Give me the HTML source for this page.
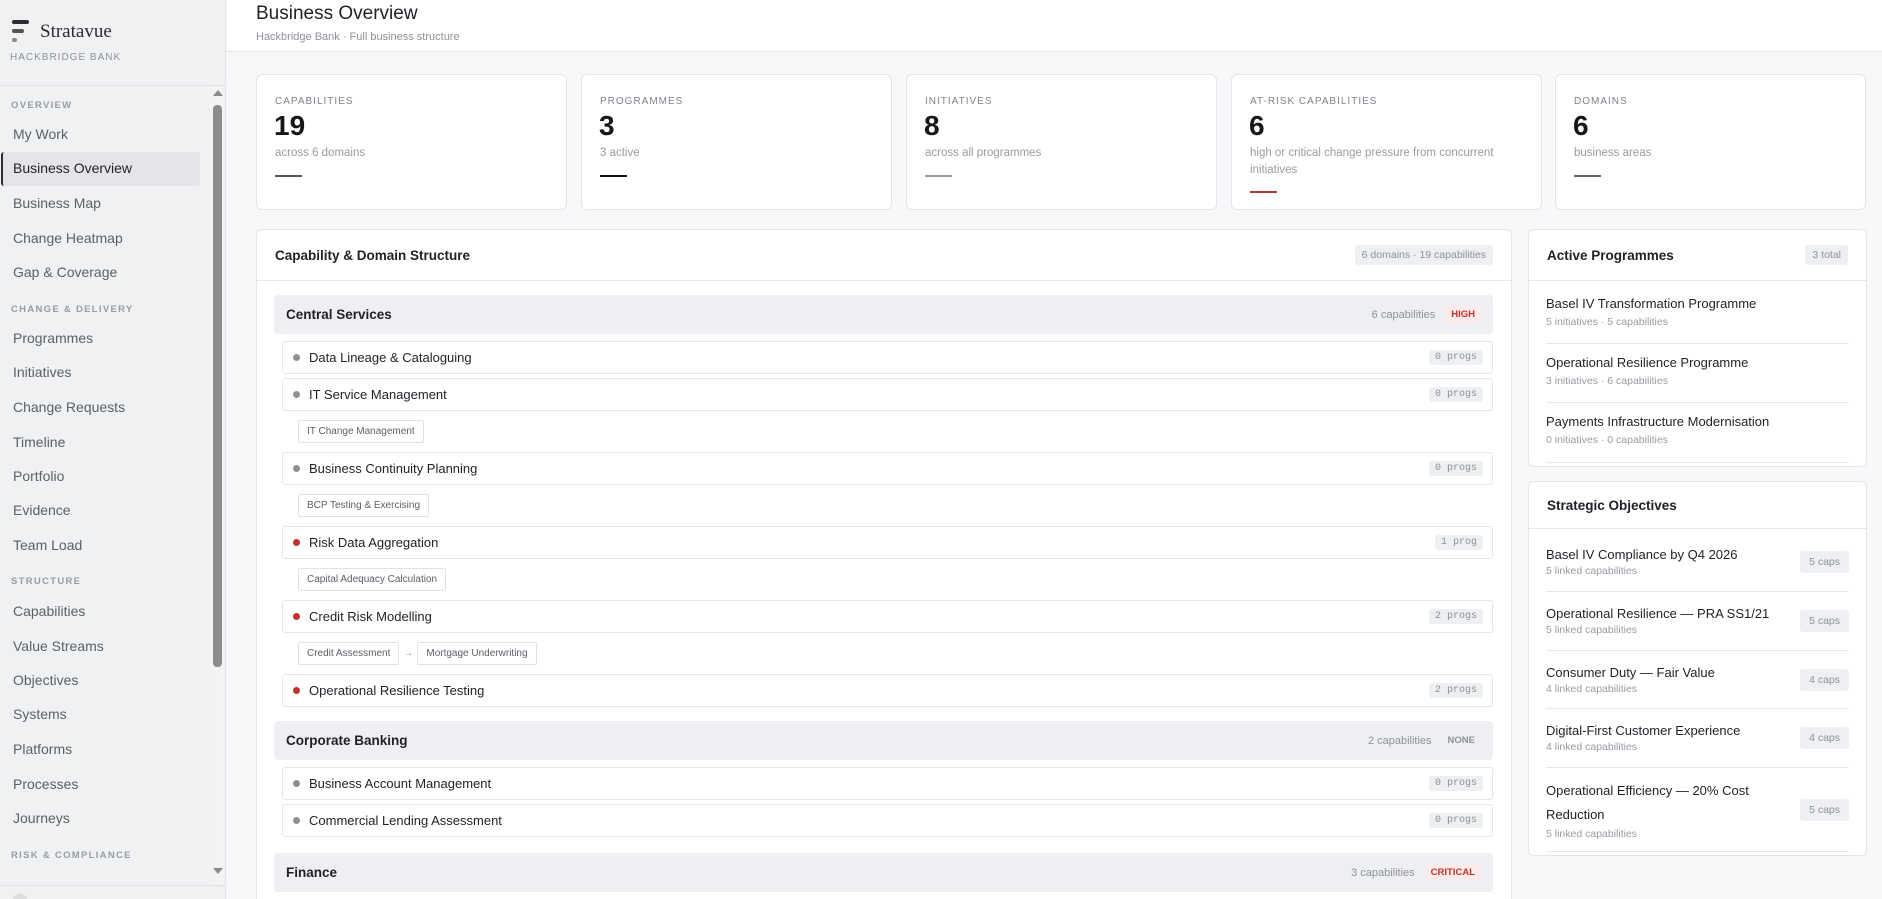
<!DOCTYPE html>
<html style="width:1882px;height:899px;overflow:hidden"><head><meta charset="utf-8"><style>
*{box-sizing:border-box;margin:0;padding:0}
body{width:1882px;height:899px;overflow:hidden;background:#f7f8fa;font-family:"Liberation Sans",sans-serif;color:#1f2127;position:relative}
.sb{position:absolute;left:0;top:0;width:226px;height:899px;background:#f0f1f3;border-right:1px solid #e3e5e8}
.sb .it{position:absolute;left:13px;height:34px;line-height:34px;font-size:14px;color:#5d6068}
.sb .lb{position:absolute;left:11px;font-size:9.5px;letter-spacing:1.3px;color:#999ca3;font-weight:bold;height:12px;line-height:12px}
.sb .act{position:absolute;left:1px;top:152px;width:199px;height:34px;background:#e4e5e9;border-left:2px solid #2a2c31;border-radius:3px}
.hdr{position:absolute;left:227px;top:0;right:0;height:52px;background:#fff;border-bottom:1px solid #e3e5e8}
.card{position:absolute;background:#fff;border:1px solid #e3e5e8;border-radius:6px}
.st{top:74px;width:311px;height:136px}
.st .lab{position:absolute;left:18px;top:21px;font-size:10px;letter-spacing:1px;color:#80838b}
.st .num{position:absolute;left:17px;top:35px;font-size:28px;color:#15171b;font-weight:bold}
.st .sub{position:absolute;left:18px;top:70px;font-size:11.5px;color:#989ba2;line-height:17px;width:270px}
.st .bar{position:absolute;left:18px;width:27px;height:2px}
.ph{height:51px;border-bottom:1px solid #e6e7ea;display:flex;align-items:center;justify-content:space-between;padding:0 18px}
.ph b{font-size:13.5px;color:#1f2127}
.pill{background:#eeeff2;color:#8e9198;font-size:10.5px;padding:4px 7px;border-radius:3px}
.dom{height:39px;background:#eeeff2;border-radius:4px;display:flex;align-items:center;justify-content:space-between;padding:0 12px;margin-bottom:7px}
.dom b{font-size:13.5px;color:#1f2127;font-weight:bold}
.dom .r{font-size:11px;color:#8e9198;display:flex;align-items:center}
.tag{font-size:9.5px;font-weight:bold;padding:3px 6px;border-radius:3px;margin-left:10px}
.cap{height:33px;margin:0 0 4px 8px;background:#fff;border:1px solid #e4e5e8;border-radius:3px;display:flex;align-items:center;padding:0 9px 0 10px;font-size:13px}
.cap .d{width:7px;height:7px;border-radius:50%;background:#8d8f95;margin-right:9px}
.cap .d.r{background:#c0322f}
.cap .p{margin-left:auto;font-family:"Liberation Mono",monospace;font-size:10px;color:#8e9198;background:#eeeff2;padding:2px 6px;border-radius:3px}
.chips{height:33px;margin:0 0 4px 24px;display:flex;align-items:center}
.chip{border:1px solid #dfe1e4;background:#fff;font-size:10px;color:#5d6068;padding:5px 8px;border-radius:2px}
.ar{color:#999;font-size:10px;margin:0 4px}
.prog{position:absolute;left:17px;right:17px;border-bottom:1px solid #e6e7ea}
.rt{font-size:13px;color:#1f2127;width:240px}
.rs{font-size:10.5px;color:#989ba2}
.cp{position:absolute;right:0;background:#eeeff2;color:#8e9198;font-size:10.5px;padding:5px 9px;border-radius:3px}
</style></head><body>
<div class="sb">
  <div style="position:absolute;left:12px;top:20px;width:17px;height:4px;background:#2a2c31;border-radius:2px"></div>
  <div style="position:absolute;left:12px;top:29px;width:12px;height:4px;background:#555;border-radius:2px"></div>
  <div style="position:absolute;left:12px;top:38px;width:5px;height:4px;background:#888;border-radius:2px"></div>
  <div style="position:absolute;left:40px;top:21px;font-family:'Liberation Serif',serif;font-size:19px;color:#2a2c31">Stratavue</div>
  <div style="position:absolute;left:10px;top:52px;font-size:10px;letter-spacing:1px;color:#8e9198">HACKBRIDGE BANK</div>
  <div style="position:absolute;left:0;top:85px;width:225px;border-top:1px solid #e0e2e5"></div>
  <div class="act"></div>
  <div class="lb" style="top:100px">OVERVIEW</div>
  <div class="it" style="top:117px">My Work</div>
  <div class="it" style="top:151px;color:#1f2127">Business Overview</div>
  <div class="it" style="top:186px">Business Map</div>
  <div class="it" style="top:221px">Change Heatmap</div>
  <div class="it" style="top:255px">Gap &amp; Coverage</div>
  <div class="lb" style="top:304px">CHANGE &amp; DELIVERY</div>
  <div class="it" style="top:321px">Programmes</div>
  <div class="it" style="top:355px">Initiatives</div>
  <div class="it" style="top:390px">Change Requests</div>
  <div class="it" style="top:425px">Timeline</div>
  <div class="it" style="top:459px">Portfolio</div>
  <div class="it" style="top:493px">Evidence</div>
  <div class="it" style="top:528px">Team Load</div>
  <div class="lb" style="top:576px">STRUCTURE</div>
  <div class="it" style="top:594px">Capabilities</div>
  <div class="it" style="top:629px">Value Streams</div>
  <div class="it" style="top:663px">Objectives</div>
  <div class="it" style="top:697px">Systems</div>
  <div class="it" style="top:732px">Platforms</div>
  <div class="it" style="top:767px">Processes</div>
  <div class="it" style="top:801px">Journeys</div>
  <div class="lb" style="top:850px">RISK &amp; COMPLIANCE</div>
  <div style="position:absolute;left:210px;top:86px;width:14px;height:800px;background:#f3f3f4"></div>
  <div style="position:absolute;left:213px;top:90px;width:0;height:0;border-left:5px solid transparent;border-right:5px solid transparent;border-bottom:6px solid #8a8a8a"></div>
  <div style="position:absolute;left:213px;top:105px;width:9px;height:562px;background:#8c8c8c;border-radius:4px"></div>
  <div style="position:absolute;left:213px;top:868px;width:0;height:0;border-left:5px solid transparent;border-right:5px solid transparent;border-top:6px solid #8a8a8a"></div>
  <div style="position:absolute;left:0;top:885px;width:225px;border-top:1px solid #e0e2e5"></div>
  <div style="position:absolute;left:12px;top:894px;width:16px;height:16px;border-radius:50%;background:#ddd"></div>
</div>
<div class="hdr">
  <div style="position:absolute;left:29px;top:3px;font-size:19px;color:#1f2127">Business Overview</div>
  <div style="position:absolute;left:29px;top:31px;font-size:11px;color:#8e9198">Hackbridge Bank · Full business structure</div>
</div>

<div class="card st" style="left:256px"><div class="lab">CAPABILITIES</div><div class="num">19</div><div class="sub">across 6 domains</div><div class="bar" style="top:100px;background:#555"></div></div>
<div class="card st" style="left:581px"><div class="lab">PROGRAMMES</div><div class="num">3</div><div class="sub">3 active</div><div class="bar" style="top:100px;background:#15171b"></div></div>
<div class="card st" style="left:906px"><div class="lab">INITIATIVES</div><div class="num">8</div><div class="sub">across all programmes</div><div class="bar" style="top:100px;background:#9a9a9a"></div></div>
<div class="card st" style="left:1231px"><div class="lab">AT-RISK CAPABILITIES</div><div class="num">6</div><div class="sub">high or critical change pressure from concurrent initiatives</div><div class="bar" style="top:116px;background:#b23a3a"></div></div>
<div class="card st" style="left:1555px"><div class="lab">DOMAINS</div><div class="num">6</div><div class="sub">business areas</div><div class="bar" style="top:100px;background:#666"></div></div>

<div class="card" style="left:256px;top:229px;width:1256px;height:670px;overflow:hidden;border-bottom:none;border-radius:6px 6px 0 0">
  <div class="ph"><b>Capability &amp; Domain Structure</b><span class="pill">6 domains · 19 capabilities</span></div>
  <div style="padding:14px 18px 0 17px">
    <div class="dom"><b>Central Services</b><span class="r">6 capabilities<span class="tag" style="color:#c0322f;background:#fbeceb">HIGH</span></span></div>
    <div class="cap"><span class="d"></span>Data Lineage &amp; Cataloguing<span class="p">0 progs</span></div>
    <div class="cap"><span class="d"></span>IT Service Management<span class="p">0 progs</span></div>
    <div class="chips"><span class="chip">IT Change Management</span></div>
    <div class="cap"><span class="d"></span>Business Continuity Planning<span class="p">0 progs</span></div>
    <div class="chips"><span class="chip">BCP Testing &amp; Exercising</span></div>
    <div class="cap"><span class="d r"></span>Risk Data Aggregation<span class="p">1 prog</span></div>
    <div class="chips"><span class="chip">Capital Adequacy Calculation</span></div>
    <div class="cap"><span class="d r"></span>Credit Risk Modelling<span class="p">2 progs</span></div>
    <div class="chips"><span class="chip">Credit Assessment</span><span class="ar">→</span><span class="chip">Mortgage Underwriting</span></div>
    <div class="cap"><span class="d r"></span>Operational Resilience Testing<span class="p">2 progs</span></div>
    <div class="dom" style="margin-top:14px"><b>Corporate Banking</b><span class="r">2 capabilities<span class="tag" style="color:#8e9198">NONE</span></span></div>
    <div class="cap"><span class="d"></span>Business Account Management<span class="p">0 progs</span></div>
    <div class="cap"><span class="d"></span>Commercial Lending Assessment<span class="p">0 progs</span></div>
    <div class="dom" style="margin-top:16px"><b>Finance</b><span class="r">3 capabilities<span class="tag" style="color:#c0322f;background:#fbeceb">CRITICAL</span></span></div>
    <div class="cap"></div>
  </div>
</div>

<div class="card" style="left:1528px;top:229px;width:339px;height:238px">
  <div class="ph"><b>Active Programmes</b><span class="pill">3 total</span></div>
  <div class="prog" style="top:66px;height:48px"><div class="rt">Basel IV Transformation Programme</div><div class="rs" style="margin-top:5px">5 initiatives · 5 capabilities</div></div>
  <div class="prog" style="top:125px;height:48px"><div class="rt">Operational Resilience Programme</div><div class="rs" style="margin-top:5px">3 initiatives · 6 capabilities</div></div>
  <div class="prog" style="top:184px;height:49px"><div class="rt">Payments Infrastructure Modernisation</div><div class="rs" style="margin-top:5px">0 initiatives · 0 capabilities</div></div>
</div>

<div class="card" style="left:1528px;top:481px;width:339px;height:375px">
  <div class="ph" style="height:47px"><b>Strategic Objectives</b></div>
  <div class="prog" style="top:65px;height:45px"><div class="rt">Basel IV Compliance by Q4 2026</div><div class="rs" style="margin-top:3px">5 linked capabilities</div><span class="cp" style="top:4px">5 caps</span></div>
  <div class="prog" style="top:124px;height:45px"><div class="rt">Operational Resilience — PRA SS1/21</div><div class="rs" style="margin-top:3px">5 linked capabilities</div><span class="cp" style="top:4px">5 caps</span></div>
  <div class="prog" style="top:183px;height:44px"><div class="rt">Consumer Duty — Fair Value</div><div class="rs" style="margin-top:3px">4 linked capabilities</div><span class="cp" style="top:4px">4 caps</span></div>
  <div class="prog" style="top:241px;height:45px"><div class="rt">Digital-First Customer Experience</div><div class="rs" style="margin-top:3px">4 linked capabilities</div><span class="cp" style="top:4px">4 caps</span></div>
  <div class="prog" style="top:297px;height:73px"><div class="rt" style="line-height:24px">Operational Efficiency — 20% Cost Reduction</div><div class="rs" style="margin-top:1px">5 linked capabilities</div><span class="cp" style="top:20px">5 caps</span></div>
</div>
</body></html>
